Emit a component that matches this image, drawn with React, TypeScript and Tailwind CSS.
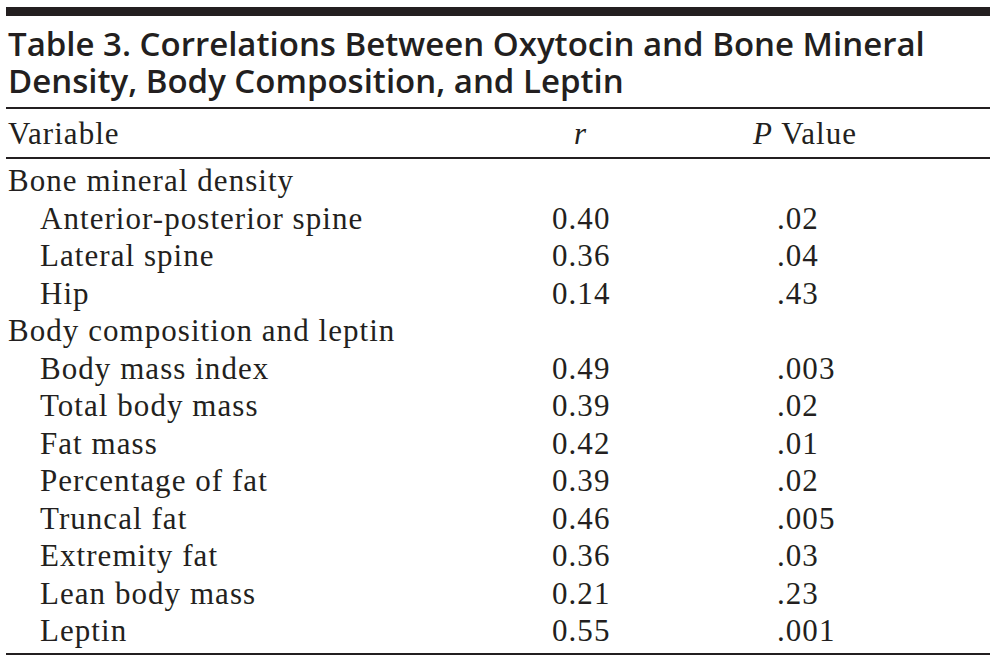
const sections = [
  {
    title: "Bone mineral density",
    rows: [
      ["Anterior-posterior spine", "0.40", ".02"],
      ["Lateral spine", "0.36", ".04"],
      ["Hip", "0.14", ".43"],
    ],
  },
  {
    title: "Body composition and leptin",
    rows: [
      ["Body mass index", "0.49", ".003"],
      ["Total body mass", "0.39", ".02"],
      ["Fat mass", "0.42", ".01"],
      ["Percentage of fat", "0.39", ".02"],
      ["Truncal fat", "0.46", ".005"],
      ["Extremity fat", "0.36", ".03"],
      ["Lean body mass", "0.21", ".23"],
      ["Leptin", "0.55", ".001"],
    ],
  },
];

const Row = ({ label, r, p, indent }: { label: string; r?: string; p?: string; indent?: boolean }) => (
  <div className="flex h-[37.5px] leading-[37.5px]">
    <div className={`w-[546px] ${indent ? "pl-[34px]" : "pl-[2px]"}`}>{label}</div>
    <div className="w-[225px]">{r}</div>
    <div>{p}</div>
  </div>
);

export default function App() {
  return (
    <div className="min-h-[666px] bg-white pt-[7px] px-[6px] text-[#231f20]">
      <div className="w-[984px]">
        <div className="h-[9px] bg-[#231f20]" />
        <h1 className="mt-[9px] pl-[2px] font-['Open_Sans',sans-serif] text-[33px] font-semibold leading-[37px] tracking-[0px] whitespace-nowrap">
          Table 3. Correlations Between Oxytocin and Bone Mineral
          <br />
          Density, Body Composition, and Leptin
        </h1>
        <div className="mt-[8px] h-[2px] bg-[#231f20]" />
        <div className="font-['Liberation_Serif',serif] text-[31px] tracking-[1.05px]">
          <div className="flex pt-[6px] pb-[5px] leading-[37px]">
            <div className="w-[546px] pl-[2px]">Variable</div>
            <div className="w-[225px] pl-[22px] italic">r</div>
            <div className="-ml-[24px]">
              <span className="italic">P</span> Value
            </div>
          </div>
          <div className="h-[2px] bg-[#231f20]" />
          <div className="pt-[3px] pb-[3px]">
            {sections.map((s) => (
              <div key={s.title}>
                <Row label={s.title} />
                {s.rows.map(([label, r, p]) => (
                  <Row key={label} label={label} r={r} p={p} indent />
                ))}
              </div>
            ))}
          </div>
          <div className="h-[2px] bg-[#231f20]" />
        </div>
      </div>
    </div>
  );
}
